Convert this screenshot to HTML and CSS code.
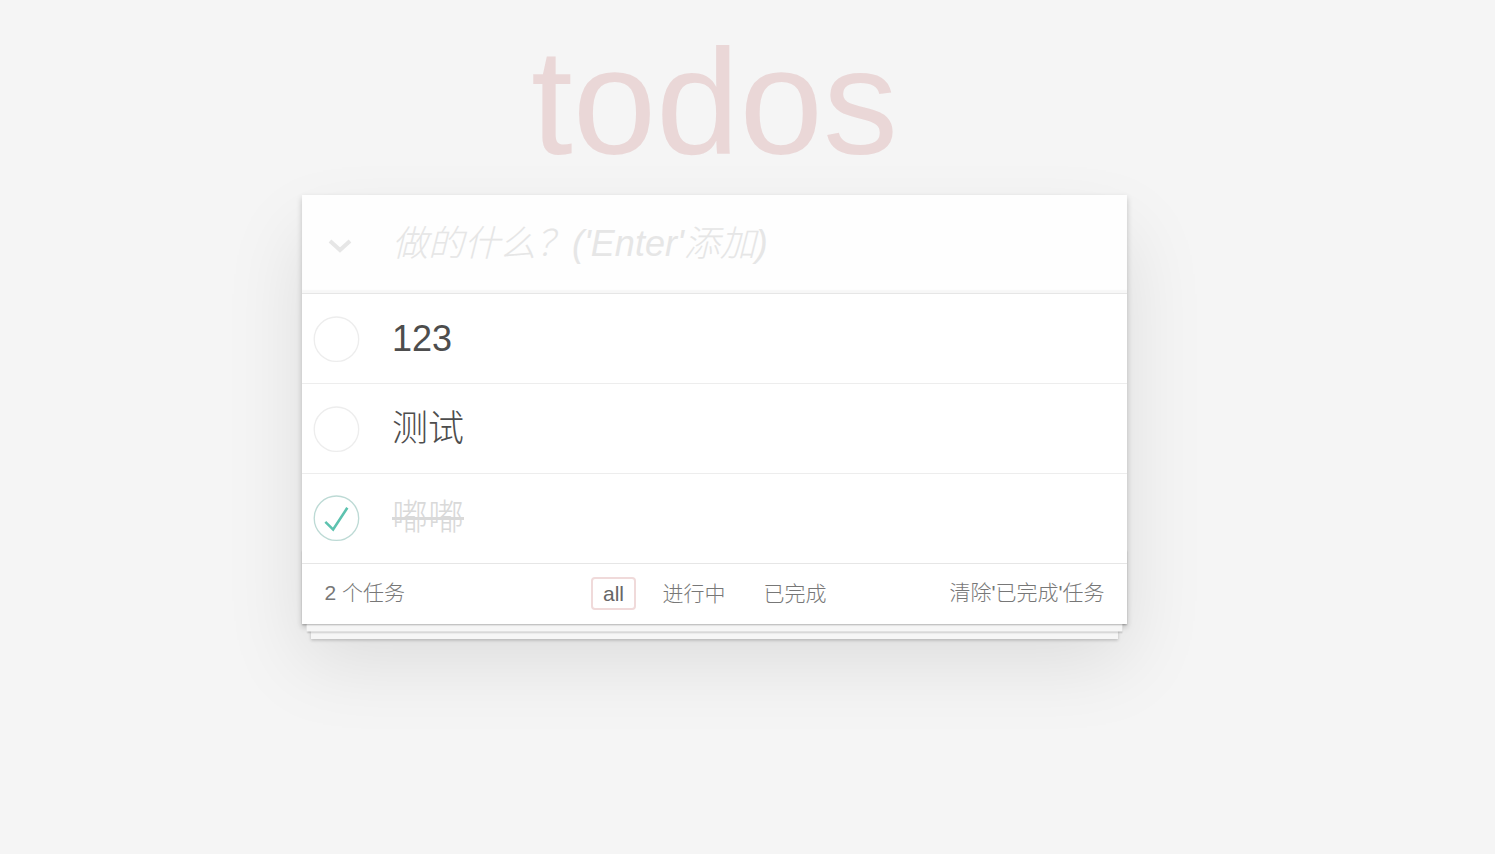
FILE: index.html
```html
<!DOCTYPE html>
<html lang="zh">
<head>
<meta charset="utf-8">
<title>todos</title>
<link rel="stylesheet" href="styles.css">
</head>
<body>
<div class="page">
  <h1 class="title">todos</h1>
  <section class="todoapp">
    <header class="header">
      <span class="toggle-all">
        <svg width="24" height="14" viewBox="0 0 24 14"><path d="M2 2 L12 11 L22 2" fill="none" stroke="#e6e6e6" stroke-width="4"/></svg>
      </span>
      <input class="new-todo" placeholder="做的什么？('Enter'添加)">
    </header>
    <ul class="todo-list">
      <li class="todo">
        <svg class="toggle" width="60" height="60" viewBox="-10 -18 100 135"><circle cx="50" cy="50" r="50" fill="none" stroke="#ededed" stroke-width="3"/></svg>
        <label class="todo-label">123</label>
      </li>
      <li class="todo">
        <svg class="toggle" width="60" height="60" viewBox="-10 -18 100 135"><circle cx="50" cy="50" r="50" fill="none" stroke="#ededed" stroke-width="3"/></svg>
        <label class="todo-label">测试</label>
      </li>
      <li class="todo completed">
        <svg class="toggle" width="60" height="60" viewBox="-10 -18 100 135"><circle cx="50" cy="50" r="50" fill="none" stroke="#bddad5" stroke-width="3"/><path fill="#5dc2af" d="M72 25L42 71 27 56l-4 4 20 20 34-52z"/></svg>
        <label class="todo-label">嘟嘟</label>
      </li>
    </ul>
    <footer class="footer">
      <span class="todo-count">2 个任务</span>
      <ul class="filters">
        <li><a class="selected">all</a></li>
        <li><a>进行中</a></li>
        <li><a>已完成</a></li>
      </ul>
      <span class="clear-completed">清除'已完成'任务</span>
    </footer>
  </section>
</div>
</body>
</html>
```
FILE: styles.css
```css
html, body {
  margin: 0;
  padding: 0;
}
body {
  background: #f5f5f5;
  color: #4d4d4d;
  font-family: "Liberation Sans", Arial, "Noto Sans CJK SC", sans-serif;
  font-weight: 300;
  font-size: 21px;
  min-height: 854px;
}
.page {
  width: 825px;
  margin-left: 302px;
  padding-bottom: 60px;
}
.title {
  margin: 27px 0 18px 0;
  height: 150px;
  line-height: 150px;
  font-size: 150px;
  font-weight: 400;
  text-align: center;
  color: rgba(175, 47, 47, 0.15);
}
.todoapp {
  position: relative;
  z-index: 1;
  background: #fff;
  box-shadow: 0 3px 6px 0 rgba(0, 0, 0, 0.2), 0 37.5px 75px 0 rgba(0, 0, 0, 0.1);
}
.header {
  display: flex;
  align-items: center;
  height: 98.4px;
  box-shadow: inset 0 -3px 1.5px rgba(0, 0, 0, 0.03);
  background: rgba(0, 0, 0, 0.003);
}
.toggle-all {
  display: flex;
  width: 24px;
  margin: 4px 0 0 26px;
  flex: none;
}
.new-todo {
  flex: 1;
  min-width: 0;
  border: none;
  outline: none;
  background: transparent;
  padding: 0 24px 0 40px;
  height: 98.4px;
  font-family: "Liberation Sans", Arial, "Noto Sans CJK SC", sans-serif;
  font-size: 36px;
  font-weight: 300;
  color: #4d4d4d;
}
.new-todo::placeholder {
  font-style: italic;
  color: #e6e6e6;
}
.todo-list {
  list-style: none;
  margin: 0;
  padding: 0;
  border-top: 1px solid #e6e6e6;
}
.todo {
  display: flex;
  align-items: center;
  border-bottom: 1px solid #ededed;
  font-size: 36px;
}
.toggle {
  flex: none;
  display: block;
}
.todo-label {
  flex: 1;
  padding: 22.5px 22.5px 22.5px 30px;
  line-height: 43.8px;
  color: #4d4d4d;
}
.completed .todo-label {
  color: #d9d9d9;
  text-decoration: line-through;
}
.footer {
  position: relative;
  display: grid;
  grid-template-columns: 1fr auto 1fr;
  align-items: center;
  height: 30px;
  padding: 13px 22.5px 17px;
  color: #777;
  border-top: 1px solid #e6e6e6;
  margin-top: -1px;
  line-height: 30px;
}
.footer::before {
  content: "";
  position: absolute;
  left: 0;
  right: 0;
  bottom: 0;
  height: 75px;
  overflow: hidden;
  z-index: -1;
  box-shadow: 0 1.5px 1.5px rgba(0, 0, 0, 0.2),
    0 12px 0 -4.5px #f6f6f6,
    0 13.5px 1.5px -4.5px rgba(0, 0, 0, 0.2),
    0 24px 0 -9px #f6f6f6,
    0 25.5px 3px -9px rgba(0, 0, 0, 0.2);
}
.todo-count {
  justify-self: start;
}
.filters {
  list-style: none;
  margin: 0;
  padding: 0;
  display: flex;
  gap: 6px;
}
.filters a {
  display: block;
  margin: 0 4.5px;
  padding: 0 10.5px;
  line-height: 31px;
  border: 1px solid transparent;
  border-radius: 4px;
  color: inherit;
}
.filters a.selected {
  border: 2px solid #f0dada;
  padding: 0 10px;
  line-height: 29px;
  color: #666;
}
.clear-completed {
  justify-self: end;
}
```
